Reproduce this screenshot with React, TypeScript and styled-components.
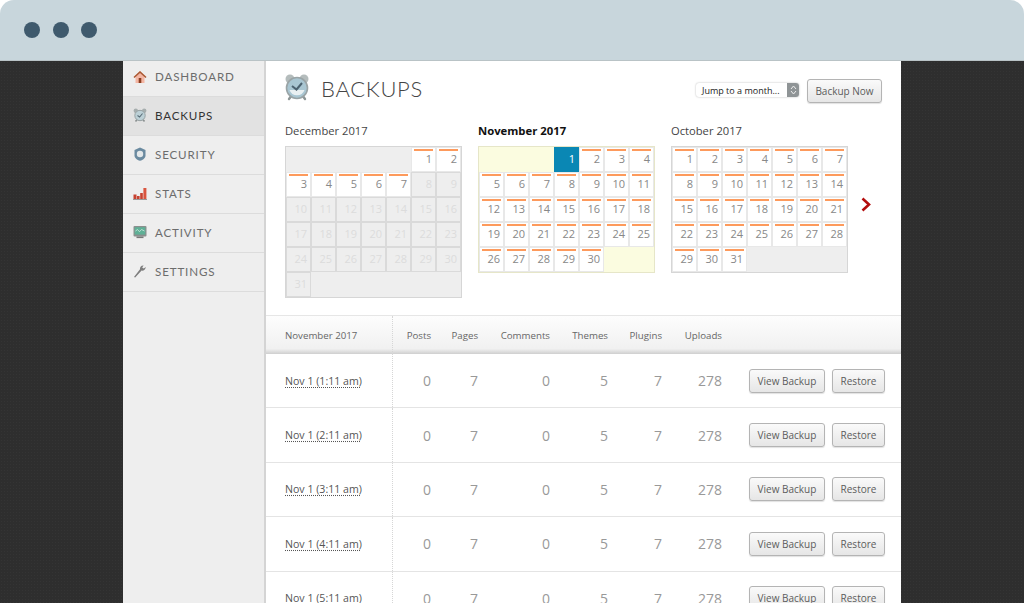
import React from "react";
import styled, { createGlobalStyle } from "styled-components";

const Global = createGlobalStyle`
  html, body { margin: 0; padding: 0; background: #fff; height: 100%; overflow: hidden; }
  * { box-sizing: border-box; }
`;

const Page = styled.div`
  width: 1024px; height: 603px; overflow: hidden; display: flex; flex-direction: column;
  font-family: "Open Sans", "Liberation Sans", sans-serif;
  background: #fff;
`;
const TitleBar = styled.div`
  flex: 0 0 61px; background: #c8d6dc; border-radius: 14px 14px 0 0;
  display: flex; align-items: center; gap: 12.5px; padding: 0 0 0 24px;
  border-bottom: 1px solid #b9c3c6;
`;
const Dot = styled.span`
  width: 16px; height: 16px; border-radius: 50%; background: #3f5a6d;
`;
const Desk = styled.div`
  flex: 1; min-height: 0; background: #2e2e2e radial-gradient(#343434 1px, transparent 1px) 0 0 / 3px 3px;
  display: flex; padding: 0 123px; overflow: hidden;
`;
const Sidebar = styled.nav`
  flex: 0 0 143px; background: #eeeeee; border-right: 2px solid #d4d4d4;
`;
const NavItem = styled.div<{ $active?: boolean; $first?: boolean }>`
  height: ${(p) => (p.$first ? 36 : 39)}px; display: flex; align-items: center; gap: 8px;
  padding: 0 0 ${(p) => (p.$first ? 4 : 2)}px 10px;
  background: ${(p) => (p.$active ? "#e2e2e2" : "transparent")};
  border-bottom: 1px solid #dcdcdc;
  font-family: Lato, "Liberation Sans", sans-serif; font-size: 11.6px; letter-spacing: 0.85px;
  color: ${(p) => (p.$active ? "#333" : "#6c6c6c")};
`;
const NavIcon = styled.svg`
  width: 14px; height: 14px; flex: none;
`;
const Main = styled.main`
  flex: 1; min-width: 0; background: #fff; display: flex; flex-direction: column;
`;
const Header = styled.header`
  flex: none; height: 56px; padding: 13px 19px 0 18px; display: flex; align-items: flex-start;
`;
const PageTitle = styled.h1`
  margin: 2px 0 0 11px; font-family: Lato, "Liberation Sans", sans-serif; font-weight: 300;
  font-size: 22px; line-height: 26px; letter-spacing: 0.7px; color: #444;
`;
const HeaderTools = styled.div`
  margin-left: auto; display: flex; align-items: center; gap: 8px; padding-top: 5px;
`;
const Select = styled.div`
  width: 103px; height: 14px; margin-top: -2px; border-radius: 3px; background: #fff; display: flex; align-items: center;
  box-shadow: 0 0 2px rgba(0,0,0,.3); font-size: 9px; color: #222; padding-left: 6px; position: relative;
  font-family: "Open Sans", sans-serif;
`;
const Stepper = styled.span`
  position: absolute; right: 0; top: 0; bottom: 0; width: 12px; background: #8f9496; border-radius: 0 3px 3px 0;
  display: flex; align-items: center; justify-content: center;
`;
const Button = styled.button<{ $w: number; $h: number }>`
  width: ${(p) => p.$w}px; height: ${(p) => p.$h}px; padding: 0; border: 1px solid #b4b4b4; border-radius: 3px;
  background: linear-gradient(#fafafa, #e6e6e6); box-shadow: 0 1px 1px rgba(0,0,0,.12);
  font-family: "Open Sans", sans-serif; font-size: 10px; color: #5c5c5c;
`;
const Calendars = styled.section`
  flex: none; height: 198px; padding: 6px 0 0 19px; display: flex; gap: 16px; position: relative;
`;
const Month = styled.div`
  width: 177px;
`;
const MonthTitle = styled.div<{ $bold?: boolean }>`
  height: 23px; font-size: ${(p) => (p.$bold ? 11.3 : 11.2)}px; line-height: 15px; color: ${(p) => (p.$bold ? "#111" : "#444")};
  font-weight: ${(p) => (p.$bold ? 700 : 400)};
`;
const Grid = styled.div<{ $tone: "plain" | "current" }>`
  display: grid; grid-template-columns: repeat(7, 1fr); grid-auto-rows: 25px;
  border: 1px solid ${(p) => (p.$tone === "current" ? "#e6e6c8" : "#d6d6d6")};
  background: ${(p) => (p.$tone === "current" ? "#e6e6c8" : "#d6d6d6")};
`;
const Cell = styled.div<{ $kind: "on" | "off" | "today" }>`
  position: relative; border: 1px solid ${(p) => (p.$kind === "off" ? "#dadada" : "#e8e8e8")};
  background: ${(p) => (p.$kind === "off" ? "#eeeeee" : p.$kind === "today" ? "#0a87b4" : "#fff")};
  color: ${(p) => (p.$kind === "off" ? "#dcdcdc" : p.$kind === "today" ? "#fff" : "#888")};
  font-size: 11px; text-align: right; padding: 2.5px 3px 0 0; line-height: 15px;
  ${(p) => (p.$kind === "today" ? "border-color:#0a87b4;" : "")}
  ${(p) => (p.$kind === "on" ? `&::before{content:"";position:absolute;left:2px;right:2px;top:1px;height:2px;background:#fd9a5c;}` : "")}
`;
const Filler = styled.div<{ $span: number; $tone: "grey" | "yellow" }>`
  grid-column: span ${(p) => p.$span};
  background: ${(p) => (p.$tone === "yellow" ? "#fbfce0" : "#eeeeee")};
`;
const NextArrow = styled.svg`
  position: absolute; left: 595px; top: 80px; width: 10px; height: 15px;
`;
const Table = styled.section`
  flex: none; display: flex; flex-direction: column;
`;
const cols = "127px 38px 47px 72px 58px 54px 60px 1fr";
const HeadRow = styled.div`
  height: 39px; display: grid; grid-template-columns: ${cols}; align-items: center;
  background: linear-gradient(#fdfdfd 0%, #f1f1f1 86%, #cfcfcf 100%);
  border-top: 1px solid #e6e6e6; font-size: 9.7px; color: #666;
`;
const BodyRow = styled.div`
  flex: none; height: 54.4px; display: grid; grid-template-columns: ${cols}; align-items: center;
  border-bottom: 1px solid #e4e4e4;
  font-size: 14px; color: #999;
`;
const DateHead = styled.div`
  align-self: stretch; display: flex; align-items: center; padding-left: 19px; border-right: 1px dotted #d6d6d6;
`;
const DateCell = styled(DateHead)`
  font-size: 10.6px; color: #555;
`;
const DateLink = styled.a`
  color: inherit; text-decoration: underline; text-decoration-style: dotted; text-underline-offset: 2px;
`;
const Num = styled.div`
  text-align: right;
`;
const Actions = styled.div`
  display: flex; gap: 7px; padding-left: 27px;
`;

const NAV: [string, React.ReactNode][] = [
  ["DASHBOARD", <><path d="M7 1 L13.5 7 H11.5 V13 H2.5 V7 H.5Z" fill="#f3b6a4" /><path d="M7 1 L13.5 7 L12.5 8 L7 3 L1.5 8 L.5 7Z" fill="#a85a35" /><rect x="5.7" y="8" width="2.6" height="5" fill="#8a3d20" /></>],
  ["BACKUPS", <><circle cx="2.8" cy="2.8" r="2.2" fill="#a6aeae" /><circle cx="11.2" cy="2.8" r="2.2" fill="#a6aeae" /><path d="M2.5 13.5l2-2.5M11.5 13.5l-2-2.5" stroke="#8a9090" strokeWidth="1.6" /><circle cx="7" cy="7.5" r="5.2" fill="#bcd0d6" stroke="#98a2a4" /><path d="M4.5 7.5L6.6 9 9.5 5.5" stroke="#5a6e78" strokeWidth="1.1" fill="none" /></>],
  ["SECURITY", <><path d="M7 .5 L12.5 3 V8.5 C12.5 11 10 13 7 13.8 C4 13 1.5 11 1.5 8.5 V3Z" fill="#6a8aa0" /><circle cx="7" cy="7" r="3.2" fill="#e3e8ea" /></>],
  ["STATS", <><rect x=".5" y="8.5" width="3" height="4.5" fill="#c6412f" /><rect x="4" y="10" width="2.6" height="3" fill="#c6412f" /><rect x="7.2" y="7" width="2.6" height="6" fill="#c6412f" /><rect x="10.4" y="2" width="3" height="11" fill="#d9553f" /><rect x="0" y="13" width="14" height="1" fill="#999" /></>],
  ["ACTIVITY", <><rect x=".5" y="1" width="13" height="10.5" rx="1" fill="#8b8f8e" /><rect x="1.7" y="2.2" width="10.6" height="7.4" fill="#5fb096" /><path d="M2.5 6l2-1.5 2 2.2 2-2.2 3 1.5" stroke="#cfe9df" strokeWidth=".8" fill="none" /><rect x="3.5" y="11.5" width="7" height="1.6" fill="#777" /></>],
  ["SETTINGS", <path d="M1 13 L2.2 13.6 L8.6 6.6 C10.4 7 12.6 5.6 12.8 3 L10.7 4.6 L9.2 3.6 L10.6 1.4 C8 1.2 6.6 3.2 7 5.2Z" fill="#7d7d7d" />],
];

const Row = ({ time }: { time: string }) => (
  <BodyRow>
    <DateCell><DateLink>{time}</DateLink></DateCell>
    <Num>0</Num><Num>7</Num><Num>0</Num><Num>5</Num><Num>7</Num><Num>278</Num>
    <Actions>
      <Button $w={76} $h={24}>View Backup</Button>
      <Button $w={53} $h={24}>Restore</Button>
    </Actions>
  </BodyRow>
);

const range = (a: number, b: number) => Array.from({ length: b - a + 1 }, (_, i) => a + i);

export default function App() {
  return (
    <Page>
      <Global />
      <TitleBar><Dot /><Dot /><Dot /></TitleBar>
      <Desk>
        <Sidebar>
          {NAV.map(([label, icon], i) => (
            <NavItem key={label} $active={i === 1} $first={i === 0}>
              <NavIcon viewBox="0 0 14 14">{icon}</NavIcon>
              {label}
            </NavItem>
          ))}
        </Sidebar>
        <Main>
          <Header>
            <svg width="26" height="27" viewBox="0 0 26 27">
              <circle cx="6" cy="5" r="4.5" fill="#b4bcbc" />
              <circle cx="20" cy="5" r="4.5" fill="#b4bcbc" />
              <path d="M5 25l3-4M21 25l-3-4" stroke="#8d9696" strokeWidth="2.4" strokeLinecap="round" />
              <circle cx="13" cy="14" r="10.5" fill="#a9c6d2" stroke="#9aa4a6" strokeWidth="1.6" />
              <path d="M5.5 16a8 8 0 0 0 15 0z" fill="#e9f0f2" />
              <path d="M8 12l4.5 3.5L18 9" stroke="#4c6270" strokeWidth="2" fill="none" />
            </svg>
            <PageTitle>BACKUPS</PageTitle>
            <HeaderTools>
              <Select>
                Jump to a month...
                <Stepper>
                  <svg width="7" height="10" viewBox="0 0 7 10"><path d="M1 4l2.5-3L6 4M1 6l2.5 3L6 6" stroke="#eee" fill="none" /></svg>
                </Stepper>
              </Select>
              <Button $w={75} $h={24}>Backup Now</Button>
            </HeaderTools>
          </Header>
          <Calendars>
            <Month>
              <MonthTitle>December 2017</MonthTitle>
              <Grid $tone="plain">
                <Filler $span={5} $tone="grey" />
                {range(1, 7).map((d) => <Cell key={d} $kind="on">{d}</Cell>)}
                {range(8, 31).map((d) => <Cell key={d} $kind="off">{d}</Cell>)}
                <Filler $span={6} $tone="grey" />
              </Grid>
            </Month>
            <Month>
              <MonthTitle $bold>November 2017</MonthTitle>
              <Grid $tone="current">
                <Filler $span={3} $tone="yellow" />
                <Cell $kind="today">1</Cell>
                {range(2, 30).map((d) => <Cell key={d} $kind="on">{d}</Cell>)}
                <Filler $span={2} $tone="yellow" />
              </Grid>
            </Month>
            <Month>
              <MonthTitle>October 2017</MonthTitle>
              <Grid $tone="plain">
                {range(1, 31).map((d) => <Cell key={d} $kind="on">{d}</Cell>)}
                <Filler $span={4} $tone="grey" />
              </Grid>
            </Month>
            <NextArrow viewBox="0 0 10 15"><path d="M1.5 1.5L8 7.5L1.5 13.5" stroke="#b30d0d" strokeWidth="2.6" fill="none" /></NextArrow>
          </Calendars>
          <Table>
            <HeadRow>
              <DateHead>November 2017</DateHead>
              <Num>Posts</Num><Num>Pages</Num><Num>Comments</Num><Num>Themes</Num><Num>Plugins</Num><Num>Uploads</Num>
            </HeadRow>
            {["1:11", "2:11", "3:11", "4:11", "5:11"].map((t) => (
              <Row key={t} time={`Nov 1 (${t} am)`} />
            ))}
          </Table>
        </Main>
      </Desk>
    </Page>
  );
}
